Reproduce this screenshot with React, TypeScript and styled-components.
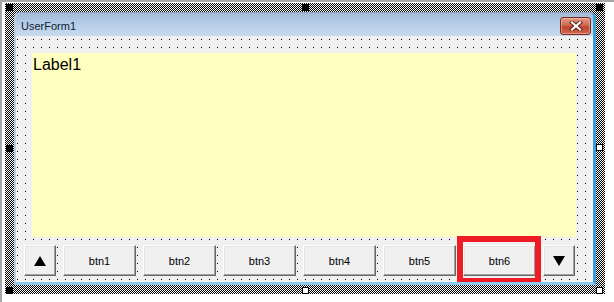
import React from "react";
import styled, { createGlobalStyle } from "styled-components";

const GlobalStyle = createGlobalStyle`
  html, body { margin: 0; padding: 0; background: #ffffff; }
  body { font-family: "Liberation Sans", Arial, sans-serif; }
`;

const Screen = styled.div`
  width: 612px;
  height: 300px;
  border-top: 2px solid #a7a7a7;
  border-left: 2px solid #a7a7a7;
  padding: 1px 0 0 3px;
  box-sizing: content-box;
  overflow: hidden;
`;

const Selection = styled.div`
  position: relative;
  width: 600px;
  height: 291px;
  box-sizing: border-box;
  padding: 9px;
  background: repeating-conic-gradient(#000 0 25%, #fff 0 50%) 0 0 / 2px 2px;
`;

const Handle = styled.div<{ $open?: boolean; $x: number; $y: number }>`
  position: absolute;
  left: ${(p) => p.$x}px;
  top: ${(p) => p.$y}px;
  width: 7px;
  height: 7px;
  box-sizing: border-box;
  background: ${(p) => (p.$open ? "#fff" : "#000")};
  border: 1px solid #000;
`;

const Window = styled.div`
  width: 582px;
  height: 273px;
  display: flex;
  flex-direction: column;
  border-radius: 6px 6px 0 0;
  overflow: hidden;
  background: #f0f0f0;
  border-left: 2px solid #b6cde6;
  border-right: 3px solid #3aa0d8;
  border-bottom: 3px solid #8cc8ec;
  border-top: 1px solid #8ea7c6;
  box-sizing: border-box;
`;

const TitleBar = styled.div`
  height: 23px;
  flex: none;
  display: flex;
  align-items: center;
  justify-content: space-between;
  padding: 0 2px 0 5px;
  background: linear-gradient(#a2bad7, #bcd1ea 60%, #c6d9ee);
`;

const Title = styled.span`
  font-family: "Liberation Sans", Arial, sans-serif;
  font-size: 11px;
  color: #0c1a30;
  padding-top: 2px;
`;

const CloseButton = styled.div`
  width: 31px;
  height: 18px;
  margin-top: 3px;
  box-sizing: border-box;
  border: 1px solid #7a2a1c;
  border-radius: 3px;
  background: linear-gradient(#e29a86, #d06a52 45%, #c2442f 55%, #cf6a4e);
  box-shadow: inset 0 0 0 1px rgba(255, 210, 200, 0.45);
  display: flex;
  align-items: center;
  justify-content: center;
`;

const Client = styled.div`
  flex: 1;
  display: flex;
  flex-direction: column;
  background-color: #f0f0f0;
  background-image: conic-gradient(from 270deg at 1px 1px, #000 90deg, transparent 0);
  background-size: 8px 8px;
  background-position: 1px 3px;
  padding: 17px 17px 6px 8px;
`;

const Label = styled.div`
  height: 184px;
  margin-left: 8px;
  background: #ffffc0;
  font-family: "Liberation Sans", Arial, sans-serif;
  font-size: 16px;
  color: #000;
  padding: 3px 0 0 1px;
  box-sizing: border-box;
`;

const ButtonRow = styled.div`
  margin-top: 8px;
  display: grid;
  grid-template-columns: 32px repeat(6, 73px) 32px;
  column-gap: 7px;
  height: 31px;
`;

const Button = styled.div`
  position: relative;
  box-sizing: border-box;
  height: 31px;
  background: #f0f0f0;
  border: 1px solid;
  border-color: #ffffff #696969 #696969 #ffffff;
  box-shadow: inset -1px -1px 0 #a0a0a0, inset 1px 1px 0 #e3e3e3;
  display: flex;
  align-items: center;
  justify-content: center;
  font-family: "Liberation Sans", Arial, sans-serif;
  font-size: 11px;
  color: #000;
`;

const Highlight = styled.div`
  position: absolute;
  left: -7px;
  right: -6px;
  top: -10px;
  bottom: -9px;
  border: 6px solid #ee1c25;
  pointer-events: none;
`;

const Triangle = styled.div<{ $down?: boolean }>`
  width: 0;
  height: 0;
  border-left: 6px solid transparent;
  border-right: 6px solid transparent;
  ${(p) =>
    p.$down
      ? "border-top: 10px solid #000;"
      : "border-bottom: 10px solid #000;"}
`;

const handles = [
  { x: 1, y: 1 },
  { x: 297, y: 1 },
  { x: 591, y: 1 },
  { x: 1, y: 142 },
  { x: 591, y: 141, open: true },
  { x: 1, y: 284 },
  { x: 297, y: 284, open: true },
  { x: 591, y: 284, open: true },
];

export default function App() {
  const names = ["btn1", "btn2", "btn3", "btn4", "btn5", "btn6"];
  return (
    <>
      <GlobalStyle />
      <Screen>
        <Selection>
          <Window>
            <TitleBar>
              <Title>UserForm1</Title>
              <CloseButton>
                <svg width="14" height="10" viewBox="0 0 14 10">
                  <path
                    d="M3 1.5 L11 8.5 M11 1.5 L3 8.5"
                    stroke="#5a1a10"
                    strokeWidth="4"
                    strokeLinecap="square"
                    fill="none"
                  />
                  <path
                    d="M3 1.5 L11 8.5 M11 1.5 L3 8.5"
                    stroke="#ffffff"
                    strokeWidth="2.2"
                    strokeLinecap="square"
                    fill="none"
                  />
                </svg>
              </CloseButton>
            </TitleBar>
            <Client>
              <Label>Label1</Label>
              <ButtonRow>
                <Button>
                  <Triangle />
                </Button>
                {names.map((n) => (
                  <Button key={n}>
                    {n}
                    {n === "btn6" && <Highlight />}
                  </Button>
                ))}
                <Button>
                  <Triangle $down />
                </Button>
              </ButtonRow>
            </Client>
          </Window>
          {handles.map((h, i) => (
            <Handle key={i} $x={h.x} $y={h.y} $open={h.open} />
          ))}
        </Selection>
      </Screen>
    </>
  );
}
